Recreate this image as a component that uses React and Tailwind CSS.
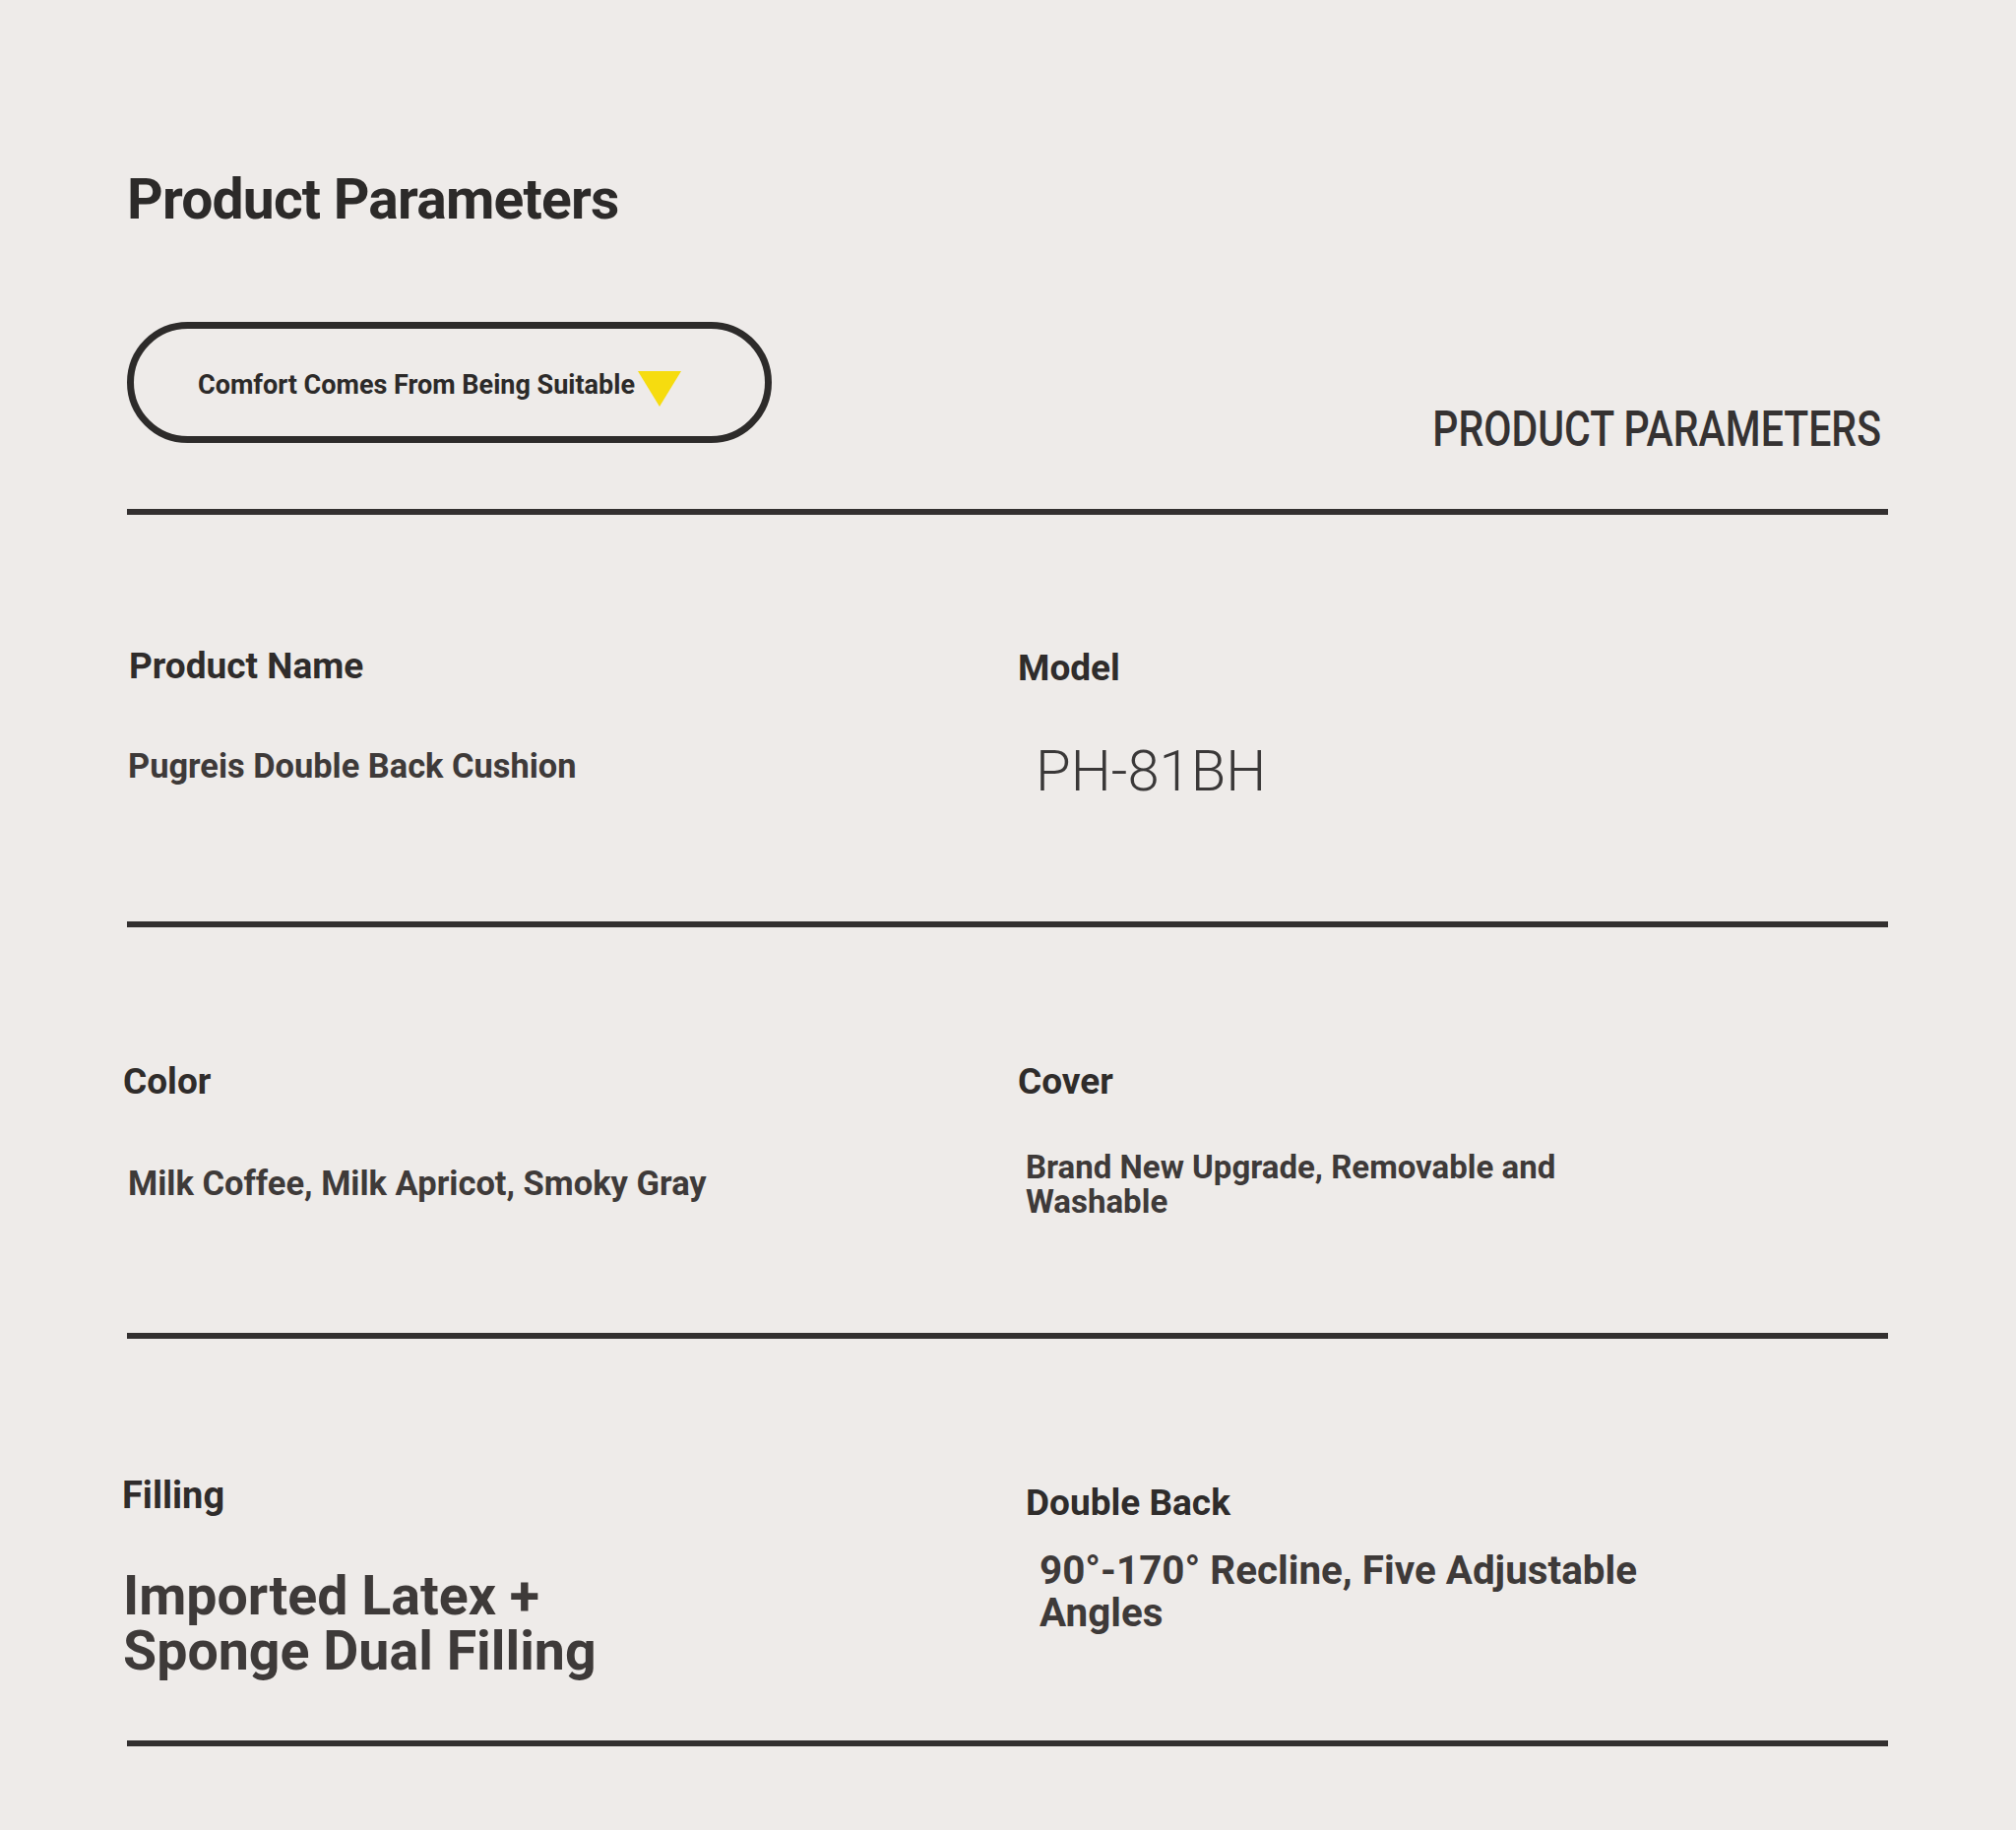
import React from "react";

const Rule = () => <div className="h-[6px] w-full bg-[#333030]" />;

const Label = ({ children, className = "" }) => (
  <p className={`text-[37px] font-bold leading-none text-[#2f2c2b] ${className}`}>
    {children}
  </p>
);

const App = () => {
  return (
    <div className="min-h-screen bg-[#eeebe9] font-[Roboto,sans-serif]">
      <div className="w-[1918px] pl-[129px] pb-[85px]">
        <h1 className="pt-[174px] text-[57px] font-bold leading-none tracking-[-0.8px] text-[#2c2a29]">
          Product Parameters
        </h1>

        <div className="mt-[96px] flex h-[123px] items-start justify-between">
          <div className="flex h-[123px] w-[655px] items-center rounded-full border-[7px] border-[#2d2b2a] pl-[65px]">
            <span className="mt-[6px] text-[27px] font-bold leading-none text-[#2c2a29]">
              Comfort Comes From Being Suitable
            </span>
            <svg
              className="ml-[3px] mt-[13px]"
              width="44"
              height="36"
              viewBox="0 0 44 36"
            >
              <polygon points="0,0 44,0 22,36" fill="#f6dc0f" />
            </svg>
          </div>
          <span className="mr-[7px] mt-[93px] inline-block origin-bottom scale-y-[1.2] text-[41px] font-medium leading-none text-[#353232]">
            PRODUCT PARAMETERS
          </span>
        </div>

        <div className="mt-[67px]">
          <Rule />
        </div>

        {/* row 1 */}
        <div className="flex h-[413px] pt-[135px]">
          <div className="w-[905px]">
            <Label className="ml-[2px]">Product Name</Label>
            <p className="ml-[1px] mt-[66px] text-[34.4px] font-bold leading-none text-[#3e3a39]">
              Pugreis Double Back Cushion
            </p>
          </div>
          <div className="flex-1">
            <Label className="mt-[2px]">Model</Label>
            <p className="ml-[18px] mt-[57px] text-[58px] font-light leading-none text-[#3a3838]">
              PH-81BH
            </p>
          </div>
        </div>
        <Rule />

        {/* row 2 */}
        <div className="flex h-[412px] pt-[138px]">
          <div className="w-[905px]">
            <Label className="-ml-[4px]">Color</Label>
            <p className="ml-[1px] mt-[68px] text-[34.5px] font-bold leading-none text-[#3e3a39]">
              Milk Coffee, Milk Apricot, Smoky Gray
            </p>
          </div>
          <div className="flex-1">
            <Label>Cover</Label>
            <p className="ml-[8px] mt-[51px] w-[580px] text-[33px] font-bold leading-[35px] text-[#3e3a39]">
              Brand New Upgrade, Removable and Washable
            </p>
          </div>
        </div>
        <Rule />

        {/* row 3 */}
        <div className="flex h-[408px] pt-[140px]">
          <div className="w-[905px]">
            <Label className="-ml-[5px] text-[38px]">Filling</Label>
            <p className="-ml-[4px] mt-[56px] w-[520px] text-[55.5px] font-bold leading-[56px] text-[#3e3a39]">
              Imported Latex + Sponge Dual Filling
            </p>
          </div>
          <div className="flex-1">
            <Label className="ml-[8px] mt-[8px]">Double Back</Label>
            <p className="ml-[22px] mt-[29px] w-[700px] text-[40.4px] font-bold leading-[43px] text-[#3e3a39]">
              90°-170° Recline, Five Adjustable Angles
            </p>
          </div>
        </div>
        <Rule />
      </div>
    </div>
  );
};

export default App;
